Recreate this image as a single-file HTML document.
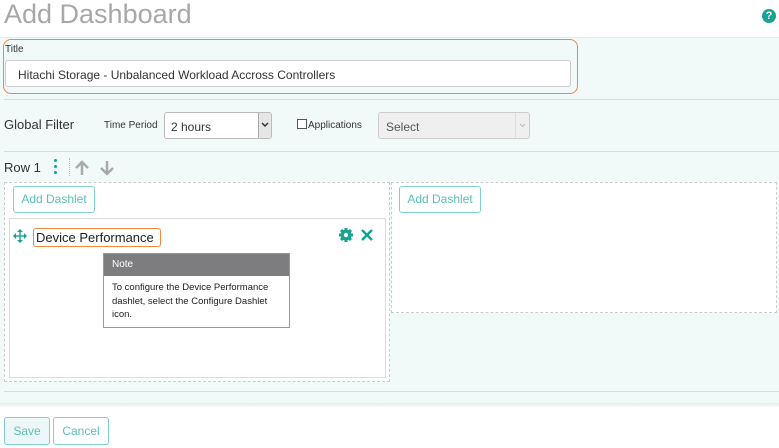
<!DOCTYPE html>
<html><head><style>
*{box-sizing:border-box}
body{margin:0;width:779px;height:448px;overflow:hidden;background:#fff;font-family:"Liberation Sans",Arial,sans-serif;position:relative}
.a{position:absolute}
.btn{position:absolute;border:1px solid #7fd1c9;border-radius:3px;color:#5cc0b6;font-size:12px;text-align:center;background:#fff}
</style></head><body>
<div class="a" style="left:4px;top:-1px;font-size:27px;color:#a8a8a8;">Add Dashboard</div>
<div class="a" style="left:762px;top:9px;width:14px;height:14px;border-radius:50%;background:#16a394;color:#fff;font-size:11px;font-weight:bold;text-align:center;line-height:14px">?</div>
<div class="a" style="left:0;top:37px;width:779px;height:368px;background:#f1f9f9;border-top:1px solid #e2eeee"></div>
<div class="a" style="left:0;top:403px;width:779px;height:5px;background:linear-gradient(#e4eaea,#fff)"></div>
<div class="a" style="left:3px;top:39px;width:575px;height:55px;border:1.5px solid #f0883e;border-radius:8px"></div>
<div class="a" style="left:5px;top:44px;font-size:10px;color:#333">Title</div>
<div class="a" style="left:5px;top:60px;width:566px;height:27px;background:#fff;border:1px solid #ccc;border-radius:3px;font-size:12px;color:#333;padding:7px 0 0 12px">Hitachi Storage - Unbalanced Workload Accross Controllers</div>
<div class="a" style="left:4px;top:99px;width:775px;border-top:1px solid #d6dddd"></div>
<div class="a" style="left:4px;top:117px;font-size:13px;color:#333">Global Filter</div>
<div class="a" style="left:104px;top:120px;font-size:10px;color:#333">Time Period</div>
<div class="a" style="left:164px;top:112px;width:108px;height:27px;background:#fff;border:1px solid #bbb;border-radius:3px;font-size:12px;color:#333;padding:7px 0 0 6px">2 hours</div>
<div class="a" style="left:258px;top:113px;width:13px;height:25px;background:#e6e6e6;border-left:1px solid #aaa;border-radius:0 2px 2px 0"></div>
<svg class="a" style="left:261px;top:122px" width="8" height="6"><path d="M1 1l3 3 3-3" stroke="#333" stroke-width="1.5" fill="none"/></svg>
<div class="a" style="left:297px;top:119px;width:10px;height:10px;border:1px solid #555;background:#fff"></div>
<div class="a" style="left:308px;top:120px;font-size:10px;color:#333">Applications</div>
<div class="a" style="left:378px;top:112px;width:152px;height:27px;background:#efefef;border:1px solid #ccc;border-radius:3px;font-size:12px;color:#555;padding:7px 0 0 7px">Select</div>
<div class="a" style="left:515px;top:113px;width:1px;height:25px;background:#ddd"></div>
<svg class="a" style="left:519px;top:123px" width="7" height="5"><path d="M1 1l2.5 2.5L6 1" stroke="#bbb" stroke-width="1" fill="none"/></svg>
<div class="a" style="left:4px;top:151px;width:775px;border-top:1px solid #d6dddd"></div>
<div class="a" style="left:4px;top:160px;font-size:13px;color:#333">Row 1</div>
<div class="a" style="left:54px;top:159px;width:3px;font-size:0">
<div style="width:3px;height:3px;background:#16a394;border-radius:50%;margin-bottom:3px"></div><div style="width:3px;height:3px;background:#16a394;border-radius:50%;margin-bottom:3px"></div><div style="width:3px;height:3px;background:#16a394;border-radius:50%"></div></div>
<div class="a" style="left:69px;top:158px;height:18px;border-left:1px dotted #bbb"></div>
<svg class="a" style="left:74px;top:159px" width="44" height="18"><g stroke="#aaa" stroke-width="2.5" fill="none"><path d="M8 16V3M2 9l6-6 6 6"/><path d="M33 2v13M27 9l6 6 6-6"/></g></svg>
<div class="a" style="left:4px;top:182px;width:386px;height:200px;border:1px dashed #ccc;background:#fff"></div>
<div class="a" style="left:391px;top:182px;width:386px;height:131px;border:1px dashed #ccc;background:#fff"></div>
<div class="btn" style="left:13px;top:186px;width:82px;height:27px;line-height:25px">Add Dashlet</div>
<div class="btn" style="left:399px;top:186px;width:82px;height:27px;line-height:25px">Add Dashlet</div>
<div class="a" style="left:9px;top:218px;width:377px;height:160px;border:1px solid #ddd;background:#fff"></div>
<svg class="a" style="left:13px;top:229px" width="14" height="14"><g fill="#16a394"><path d="M7 0l3 3H4z"/><path d="M7 14l3-3H4z"/><path d="M0 7l3-3v6z"/><path d="M14 7l-3-3v6z"/><rect x="6.3" y="3" width="1.4" height="8"/><rect x="3" y="6.3" width="8" height="1.4"/></g></svg>
<div class="a" style="left:33px;top:228px;width:128px;height:19px;border:1.5px solid #f0883e;border-radius:3px;font-size:13px;color:#222;padding:1px 0 0 2px">Device Performance</div>
<svg class="a" style="left:338px;top:227px" width="16" height="16" viewBox="0 0 16 16"><g fill="#16a394"><circle cx="8" cy="8" r="5.5"/><g stroke="#16a394" stroke-width="3"><path d="M8 1v14M1 8h14M3 3l10 10M13 3L3 13"/></g></g><circle cx="8" cy="8" r="2.2" fill="#fff"/></svg>
<svg class="a" style="left:361px;top:229px" width="12" height="12"><path d="M1 1l10 10M11 1L1 11" stroke="#16a394" stroke-width="2.5"/></svg>
<div class="a" style="left:103px;top:253px;width:187px;height:75px;border:1px solid #999;background:#fff"></div>
<div class="a" style="left:104px;top:254px;width:185px;height:22px;background:#7d7d7f;color:#fff;font-size:10px;padding:5px 0 0 8px">Note</div>
<div class="a" style="left:112px;top:281px;width:175px;font-size:9.5px;line-height:13.5px;color:#222">To configure the Device Performance dashlet, select the Configure Dashlet icon.</div>
<div class="a" style="left:4px;top:391px;width:775px;border-top:1px solid #d6dddd"></div>
<div class="btn" style="left:4px;top:417px;width:46px;height:28px;line-height:26px;background:#eef7f7">Save</div>
<div class="btn" style="left:53px;top:417px;width:56px;height:28px;line-height:26px">Cancel</div>
</body></html>
